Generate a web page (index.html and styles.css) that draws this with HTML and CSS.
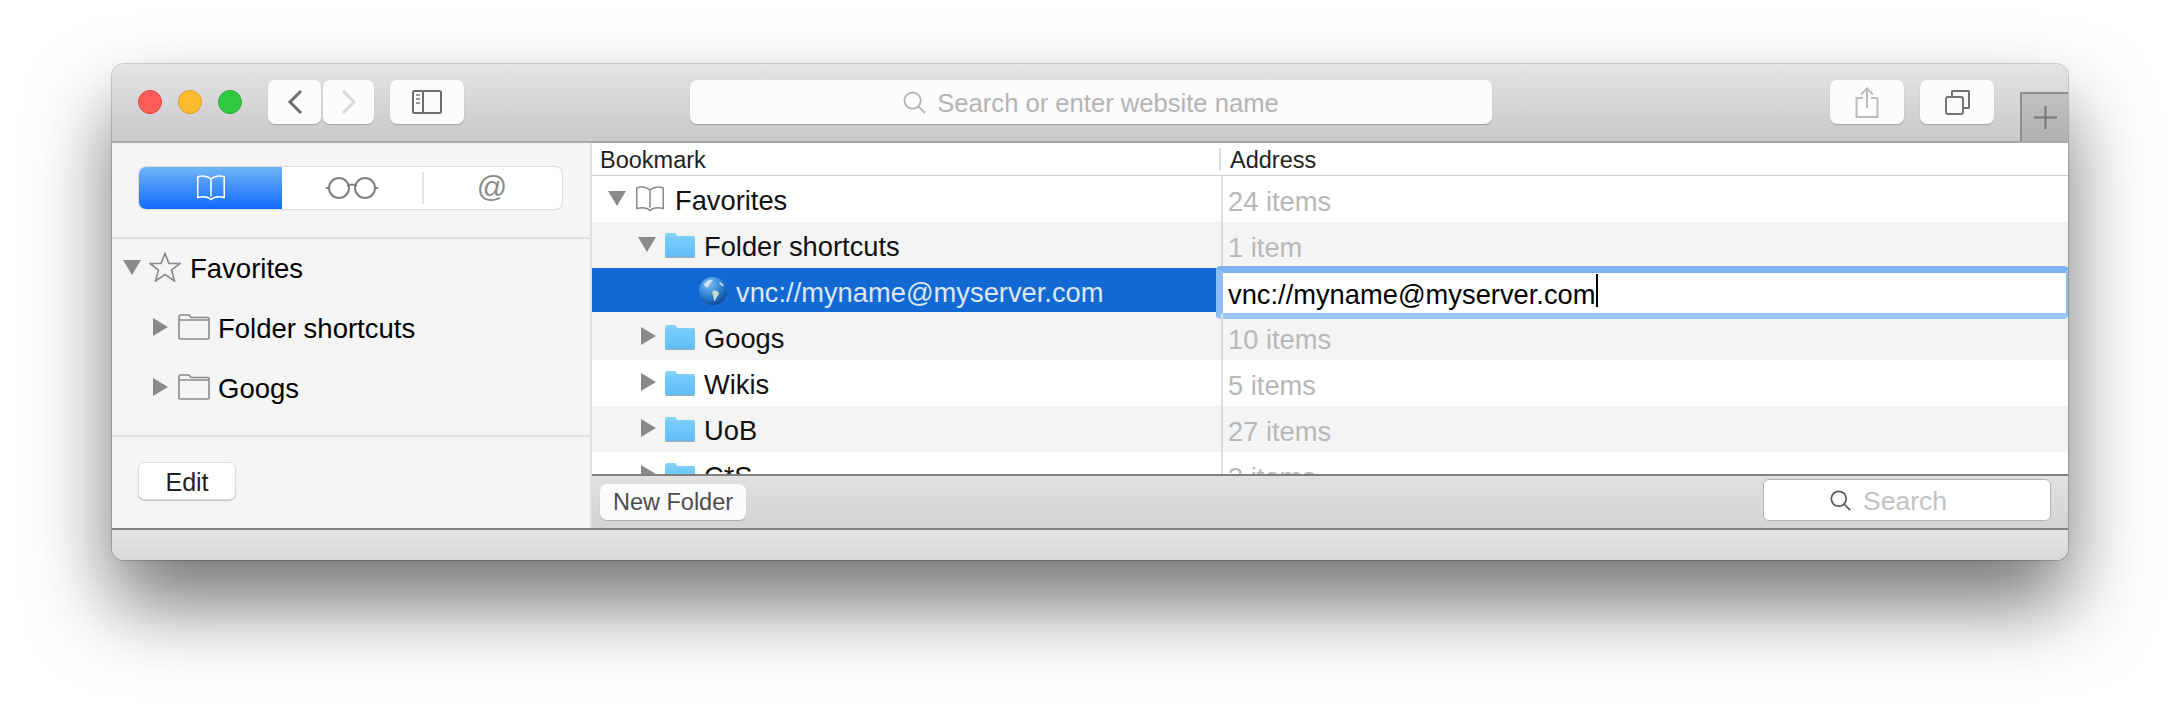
FILE: index.html
```html
<!DOCTYPE html>
<html lang="en">
<head>
    <meta charset="UTF-8">
    <title>Bookmarks</title>
    <link rel="stylesheet" href="styles.css">
</head>
<body>
    <svg class="defs" width="0" height="0">
        <defs>
            <linearGradient id="folder-back" x1="0" y1="0" x2="0" y2="1">
                <stop offset="0" stop-color="#8ad4fb"/>
                <stop offset="1" stop-color="#6cc4f8"/>
            </linearGradient>
            <linearGradient id="folder-front" x1="0" y1="0" x2="0" y2="1">
                <stop offset="0" stop-color="#76cdfb"/>
                <stop offset="1" stop-color="#62bdf6"/>
            </linearGradient>
            <radialGradient id="globe-fill" cx="0.35" cy="0.25" r="0.85">
                <stop offset="0" stop-color="#7fc0f2"/>
                <stop offset="0.5" stop-color="#2f86d8"/>
                <stop offset="1" stop-color="#0b3f8c"/>
            </radialGradient>
            <symbol id="tri-down" viewBox="0 0 18 15"><path d="M0 0H18L9 15Z" fill="#8a8a8a"/></symbol>
            <symbol id="tri-right" viewBox="0 0 15 18"><path d="M0 0V18L15 9Z" fill="#8a8a8a"/></symbol>
            <symbol id="folder-line" viewBox="0 0 32 26">
                <path d="M1 6V2.500Q1 1 2.500 1H11L13 3.500H30Q31 3.500 31 4.500V24Q31 25 30 25H2Q1 25 1 24V6H31" fill="none" stroke="#8a8a8a" stroke-width="1.600"/>
            </symbol>
            <symbol id="folder-blue" viewBox="0 0 30 25">
                <path d="M0 3Q0 0 2 0H10L12.500 3H28.500Q30 3 30 4.500V10H0Z" fill="url(#folder-back)"/>
                <path d="M0 6.500Q0 5 1.500 5H28.500Q30 5 30 6.500V22.500Q30 24 28.500 24H1.500Q0 24 0 22.500Z" fill="url(#folder-front)"/>
                <path d="M0.500 24.300H29.500" stroke="#8aa9bd" stroke-width="1.200"/>
            </symbol>
            <symbol id="book" viewBox="1 1 28 25.500">
                <path d="M15 5C12 2 6 1 2 3V23C6 22 12 22 15 25C18 22 24 22 28 23V3C24 1 18 2 15 5V22" fill="none" stroke="currentColor" stroke-width="1.500"/>
            </symbol>
            <symbol id="magnifier" viewBox="0 0 24 24">
                <circle cx="10" cy="10" r="8.500" fill="none" stroke="currentColor" stroke-width="2"/>
                <path d="M16 16L23 23" stroke="currentColor" stroke-width="2"/>
            </symbol>
        </defs>
    </svg>

    <div class="window">
        <div class="toolbar">
            <span class="light light-red"></span>
            <span class="light light-yellow"></span>
            <span class="light light-green"></span>

            <button class="tool tool-back">
                <svg width="16" height="26" viewBox="0 0 16 26"><path d="M14 2L3 13L14 24" fill="none" stroke="#6f6f6f" stroke-width="3"/></svg>
            </button>
            <button class="tool tool-forward">
                <svg width="16" height="26" viewBox="0 0 16 26"><path d="M2 2L13 13L2 24" fill="none" stroke="#d9d9d9" stroke-width="3"/></svg>
            </button>
            <button class="tool tool-sidebar">
                <svg width="30" height="24" viewBox="0 0 30 24">
                    <rect x="1" y="1" width="28" height="22" rx="1.500" fill="none" stroke="#6f6f6f" stroke-width="2"/>
                    <path d="M11 1V23" stroke="#6f6f6f" stroke-width="2"/>
                    <path d="M4 5H8M4 9H8M4 13H8" stroke="#9a9a9a" stroke-width="2"/>
                </svg>
            </button>

            <div class="url-bar">
                <svg class="url-icon" width="23" height="23"><use href="#magnifier"/></svg>
                <span>Search or enter website name</span>
            </div>

            <button class="tool tool-share">
                <svg width="24" height="31" viewBox="0 0 24 31">
                    <path d="M8 11H1.500V30H22.500V11H16" fill="none" stroke="#bcbcbc" stroke-width="2"/>
                    <path d="M12 21V2M6 7.500L12 1.500L18 7.500" fill="none" stroke="#bcbcbc" stroke-width="2"/>
                </svg>
            </button>
            <button class="tool tool-tabs">
                <svg width="25" height="25" viewBox="0 0 25 25">
                    <path d="M7 6V1.500Q7 1 7.500 1H23.500Q24 1 24 1.500V17.500Q24 18 23.500 18H19" fill="none" stroke="#737373" stroke-width="2"/>
                    <rect x="1" y="7" width="17" height="17" rx="2" fill="none" stroke="#737373" stroke-width="2"/>
                </svg>
            </button>

            <div class="new-tab">
                <svg width="23" height="23" viewBox="0 0 23 23"><path d="M11.500 0V23M0 11.500H23" stroke="#777" stroke-width="2"/></svg>
            </div>
        </div>

        <div class="content">
            <aside class="sidebar">
                <div class="side-top">
                    <div class="segments">
                        <div class="segment segment-on">
                            <svg width="30" height="26"><use href="#book"/></svg>
                        </div>
                        <div class="segment">
                            <svg width="54" height="24" viewBox="0 0 54 24">
                                <circle cx="14" cy="12" r="10" fill="none" stroke="#808080" stroke-width="2"/>
                                <circle cx="40" cy="12" r="10" fill="none" stroke="#808080" stroke-width="2"/>
                                <path d="M22 10Q27 7 32 10M4 12H1M50 12H53" fill="none" stroke="#808080" stroke-width="2"/>
                            </svg>
                        </div>
                        <div class="segment segment-at"><span>@</span></div>
                    </div>
                </div>

                <div class="side-tree">
                    <div class="side-row">
                        <svg class="tw-down" width="18" height="15"><use href="#tri-down"/></svg>
                        <svg class="side-star" width="32" height="30" viewBox="0 0 32 30">
                            <path d="M16 1.500L20 11.500H31L22.500 18L25.500 29L16 22.500L6.500 29L9.500 18L1 11.500H12Z" fill="none" stroke="#8a8a8a" stroke-width="1.600"/>
                        </svg>
                        <span>Favorites</span>
                    </div>
                    <div class="side-row side-row-sub">
                        <svg class="tw-right" width="15" height="18"><use href="#tri-right"/></svg>
                        <svg class="side-folder" width="32" height="26"><use href="#folder-line"/></svg>
                        <span>Folder shortcuts</span>
                    </div>
                    <div class="side-row side-row-sub">
                        <svg class="tw-right" width="15" height="18"><use href="#tri-right"/></svg>
                        <svg class="side-folder" width="32" height="26"><use href="#folder-line"/></svg>
                        <span>Googs</span>
                    </div>
                </div>

                <div class="side-foot">
                    <button class="edit-btn">Edit</button>
                </div>
            </aside>

            <main class="main">
                <div class="table-head">
                    <div class="head-name">Bookmark</div>
                    <div class="head-addr">Address</div>
                </div>

                <div class="table-body">
                    <div class="row">
                        <div class="cell-name level-0">
                            <svg class="tw-open" width="18" height="15"><use href="#tri-down"/></svg>
                            <svg class="book-icon" width="30" height="26"><use href="#book"/></svg>
                            <span>Favorites</span>
                        </div>
                        <div class="cell-addr">24 items</div>
                    </div>
                    <div class="row row-alt">
                        <div class="cell-name level-1">
                            <svg class="tw-open" width="18" height="15"><use href="#tri-down"/></svg>
                            <svg class="folder-icon" width="30" height="25"><use href="#folder-blue"/></svg>
                            <span>Folder shortcuts</span>
                        </div>
                        <div class="cell-addr">1 item</div>
                    </div>
                    <div class="row row-selected">
                        <div class="cell-name level-2">
                            <svg class="globe-icon" width="30" height="30" viewBox="0 0 30 30">
                                <circle cx="15" cy="15" r="14" fill="url(#globe-fill)"/>
                                <path d="M6 8C9 4 13 3 15 4C14 6 12 7 11 9C11 11 9 12 8 11C7 10 6 10 6 8Z" fill="#cfe4f6"/>
                                <path d="M15 15C17 14 20 15 21 17C21 18 20 19 19 21C18 23 17 25 16 25C16 23 15 21 15 19C14 17 14 16 15 15Z" fill="#c3dbc4"/>
                                <path d="M21 6C23 6 25 8 26 10C24 11 22 9 21 6Z" fill="#b8d8f2"/>
                            </svg>
                            <span>vnc://myname@myserver.com</span>
                        </div>
                        <div class="cell-addr">
                            <div class="edit-field">vnc://myname@myserver.com<span class="caret"></span></div>
                        </div>
                    </div>
                    <div class="row row-alt">
                        <div class="cell-name level-1">
                            <svg class="tw-closed" width="15" height="18"><use href="#tri-right"/></svg>
                            <svg class="folder-icon" width="30" height="25"><use href="#folder-blue"/></svg>
                            <span>Googs</span>
                        </div>
                        <div class="cell-addr">10 items</div>
                    </div>
                    <div class="row">
                        <div class="cell-name level-1">
                            <svg class="tw-closed" width="15" height="18"><use href="#tri-right"/></svg>
                            <svg class="folder-icon" width="30" height="25"><use href="#folder-blue"/></svg>
                            <span>Wikis</span>
                        </div>
                        <div class="cell-addr">5 items</div>
                    </div>
                    <div class="row row-alt">
                        <div class="cell-name level-1">
                            <svg class="tw-closed" width="15" height="18"><use href="#tri-right"/></svg>
                            <svg class="folder-icon" width="30" height="25"><use href="#folder-blue"/></svg>
                            <span>UoB</span>
                        </div>
                        <div class="cell-addr">27 items</div>
                    </div>
                    <div class="row">
                        <div class="cell-name level-1">
                            <svg class="tw-closed" width="15" height="18"><use href="#tri-right"/></svg>
                            <svg class="folder-icon" width="30" height="25"><use href="#folder-blue"/></svg>
                            <span>C*S</span>
                        </div>
                        <div class="cell-addr">3 items</div>
                    </div>
                </div>

                <div class="table-foot">
                    <button class="folder-btn">New Folder</button>
                    <div class="search-box">
                        <svg width="21" height="21"><use href="#magnifier"/></svg>
                        <span>Search</span>
                    </div>
                </div>
            </main>
        </div>

        <div class="statusbar"></div>
    </div>
</body>
</html>
```

FILE: styles.css
```css
body {
    margin: 0;
    height: 720px;
    padding: 64px 0 0 112px;
    box-sizing: border-box;
    background: #fff;
    overflow: hidden;
    font-family: "Liberation Sans", Arial, sans-serif;
}

button {
    font-family: inherit;
}

.defs {
    position: absolute;
}

.window {
    width: 1956px;
    height: 496px;
    border-radius: 12px;
    overflow: hidden;
    box-shadow: 0 0 0 1px rgba(0, 0, 0, 0.18), 0 44px 80px rgba(0, 0, 0, 0.55);
}

/* toolbar */
.toolbar {
    height: 79px;
    box-sizing: border-box;
    padding-left: 26px;
    display: flex;
    align-items: center;
    background: linear-gradient(#e5e3e5, #cac8ca);
    border-bottom: 2px solid #a9a7a9;
}

.light {
    width: 24px;
    height: 24px;
    box-sizing: border-box;
    border-radius: 50%;
    margin-right: 16px;
    border: 1px solid;
    margin-top: -1px;
}

.light-red {
    background: #fc5b57;
    border-color: #e2463f;
}

.light-yellow {
    background: #ffbb2e;
    border-color: #e09e1e;
}

.light-green {
    background: #2fc940;
    border-color: #28ab36;
    margin-right: 26px;
}

.tool {
    height: 44px;
    padding: 0;
    border: none;
    border-radius: 7px;
    background: #fcfcfc;
    box-shadow: 0 1px 1px rgba(0, 0, 0, 0.2);
    display: flex;
    align-items: center;
    justify-content: center;
    margin-top: -1px;
}

.tool-back {
    width: 53px;
    margin-right: 2px;
}

.tool-forward {
    width: 51px;
    margin-right: 16px;
}

.tool-sidebar {
    width: 74px;
}

.url-bar {
    width: 802px;
    height: 44px;
    margin: -1px 0 0 226px;
    border-radius: 7px;
    background: #fcfcfc;
    box-shadow: 0 1px 1px rgba(0, 0, 0, 0.25);
    display: flex;
    align-items: center;
    justify-content: center;
    gap: 11px;
    color: #b4b4b4;
    font-size: 25.600px;
}

.url-bar span {
    padding-top: 2px;
}

.tool-share {
    width: 74px;
    margin-left: 338px;
}

.tool-tabs {
    width: 74px;
    margin-left: 16px;
}

.new-tab {
    width: 48px;
    height: 49px;
    box-sizing: border-box;
    margin: 0 0 0 26px;
    align-self: flex-end;
    background: linear-gradient(#c2c0c2, #b2b0b2);
    border-left: 2px solid #8e8e8e;
    border-top: 2px solid #8e8e8e;
    display: flex;
    align-items: center;
    justify-content: center;
}

/* sidebar */
.content {
    height: 385px;
    display: flex;
}

.sidebar {
    width: 480px;
    flex: none;
    box-sizing: border-box;
    background: #f5f5f5;
    border-right: 2px solid #e2e2e2;
    display: flex;
    flex-direction: column;
}

.side-top {
    height: 96px;
    box-sizing: border-box;
    padding: 24px 0 0 27px;
    border-bottom: 2px solid #e2e2e2;
}

.segments {
    width: 423px;
    height: 42px;
    box-sizing: border-box;
    display: flex;
    background: #fff;
    border-radius: 7px;
    box-shadow: 0 0 0 1px #dcdcdc, 0 1px 1px rgba(0, 0, 0, 0.2);
    overflow: hidden;
}

.segment {
    flex: 1;
    display: flex;
    align-items: center;
    justify-content: center;
    color: #8a8a8a;
}

.segment-on {
    flex: none;
    width: 143px;
    color: #fff;
    background: linear-gradient(#71b4f8, #106bfc);
}

.segment-at {
    position: relative;
    font-size: 30px;
    padding-bottom: 3px;
}

.segment-at::before {
    content: "";
    position: absolute;
    left: 0;
    top: 5px;
    bottom: 5px;
    width: 2px;
    background: #e2e2e2;
}

.side-tree {
    flex: none;
    height: 198px;
    box-sizing: border-box;
    display: flex;
    flex-direction: column;
    gap: 4px;
    border-bottom: 2px solid #e2e2e2;
}

.side-row {
    height: 56px;
    display: flex;
    align-items: center;
    padding-left: 11px;
    font-size: 27.500px;
    color: #000;
}

.side-row span {
    padding-top: 3px;
    margin-left: -1px;
}

.side-row-sub {
    padding-left: 41px;
}

.tw-down {
    margin-right: 8px;
}

.side-star {
    margin-right: 10px;
}

.tw-right {
    margin-right: 10px;
}

.side-folder {
    margin-right: 9px;
}

.side-foot {
    flex: 1;
    padding: 25px 0 0 26px;
}

.edit-btn {
    width: 98px;
    height: 38px;
    padding: 2px 0 0;
    border: 1px solid #dcdcdc;
    border-radius: 7px;
    background: #fff;
    box-shadow: 0 1px 1px rgba(0, 0, 0, 0.2);
    font-size: 25px;
    color: #222;
}

/* bookmarks table */
.main {
    flex: 1;
    min-width: 0;
    display: flex;
    flex-direction: column;
    background: #fff;
}

.table-head {
    height: 33px;
    flex: none;
    box-sizing: border-box;
    display: flex;
    align-items: center;
    border-bottom: 1px solid #d0d0d0;
    font-size: 23.500px;
    color: #222;
}

.head-name {
    width: 629px;
    height: 22px;
    box-sizing: border-box;
    padding: 2px 0 0 8px;
    display: flex;
    align-items: center;
    border-right: 2px solid #dcdcdc;
}

.head-addr {
    padding: 2px 0 0 9px;
}

.table-body {
    height: 298px;
    flex: none;
    overflow: hidden;
}

.row {
    height: 46px;
    display: flex;
    align-items: stretch;
    font-size: 27.300px;
    color: #111;
}

.row-alt {
    background: #f4f4f4;
}

.row-selected {
    background: linear-gradient(#1269d4 44px, #f4f4f4 44px);
}

.row-selected .cell-name {
    color: #dde7f8;
}

.cell-name {
    width: 629px;
    flex: none;
    box-sizing: border-box;
    display: flex;
    align-items: center;
}

.cell-name span {
    padding-top: 4px;
}

.level-0 {
    padding-left: 16px;
}

.level-1 {
    padding-left: 46px;
}

.level-2 {
    padding-left: 106px;
}

.tw-open {
    margin: -2px 9px 0 0;
}

.tw-closed {
    margin: -2px 9px 0 3px;
}

.book-icon {
    margin-right: 10px;
    color: #8a8a8a;
}

.folder-icon {
    margin-right: 9px;
}

.globe-icon {
    margin-right: 8px;
}

.cell-addr {
    flex: 1;
    position: relative;
    display: flex;
    align-items: center;
    box-sizing: border-box;
    padding: 5px 0 0 5px;
    border-left: 2px solid #dcdcdc;
    color: #b8b8b8;
}

.row-selected .cell-addr {
    border-left-color: transparent;
}

.edit-field {
    position: absolute;
    left: -7px;
    right: 0;
    top: -2px;
    height: 53px;
    box-sizing: border-box;
    padding: 3px 0 0 5px;
    display: flex;
    align-items: center;
    background: #fff;
    border: solid #8dbdf5;
    border-width: 7px 2px 6px 7px;
    border-top-color: #7fb2f2;
    border-bottom-color: #9cc6f7;
    border-radius: 4px;
    color: #000;
}

.caret {
    width: 2px;
    height: 33px;
    margin: -8px 0 0 1px;
    background: #000;
}

.table-foot {
    height: 54px;
    flex: none;
    box-sizing: border-box;
    padding: 8px 17px 0 8px;
    border-top: 2px solid #808080;
    background: linear-gradient(#e0e0e0, #d4d4d4);
    display: flex;
    justify-content: space-between;
    align-items: flex-start;
}

.folder-btn {
    width: 146px;
    height: 36px;
    padding: 0;
    border: none;
    border-radius: 7px;
    background: #fcfcfc;
    box-shadow: 0 1px 1px rgba(0, 0, 0, 0.2);
    font-size: 23.500px;
    color: #4c4c4c;
}

.search-box {
    width: 288px;
    height: 42px;
    margin-top: -5px;
    padding-left: 66px;
    box-sizing: border-box;
    border: 1px solid #b4b4b4;
    border-radius: 6px;
    background: #fff;
    display: flex;
    align-items: center;
    gap: 12px;
    color: #595959;
}

.search-box span {
    padding-top: 2px;
    font-size: 26.500px;
    color: #c2c2c2;
}

.statusbar {
    height: 32px;
    box-sizing: border-box;
    border-top: 2px solid #808080;
    background: linear-gradient(#e4e4e4, #d8d8d8);
}
```
